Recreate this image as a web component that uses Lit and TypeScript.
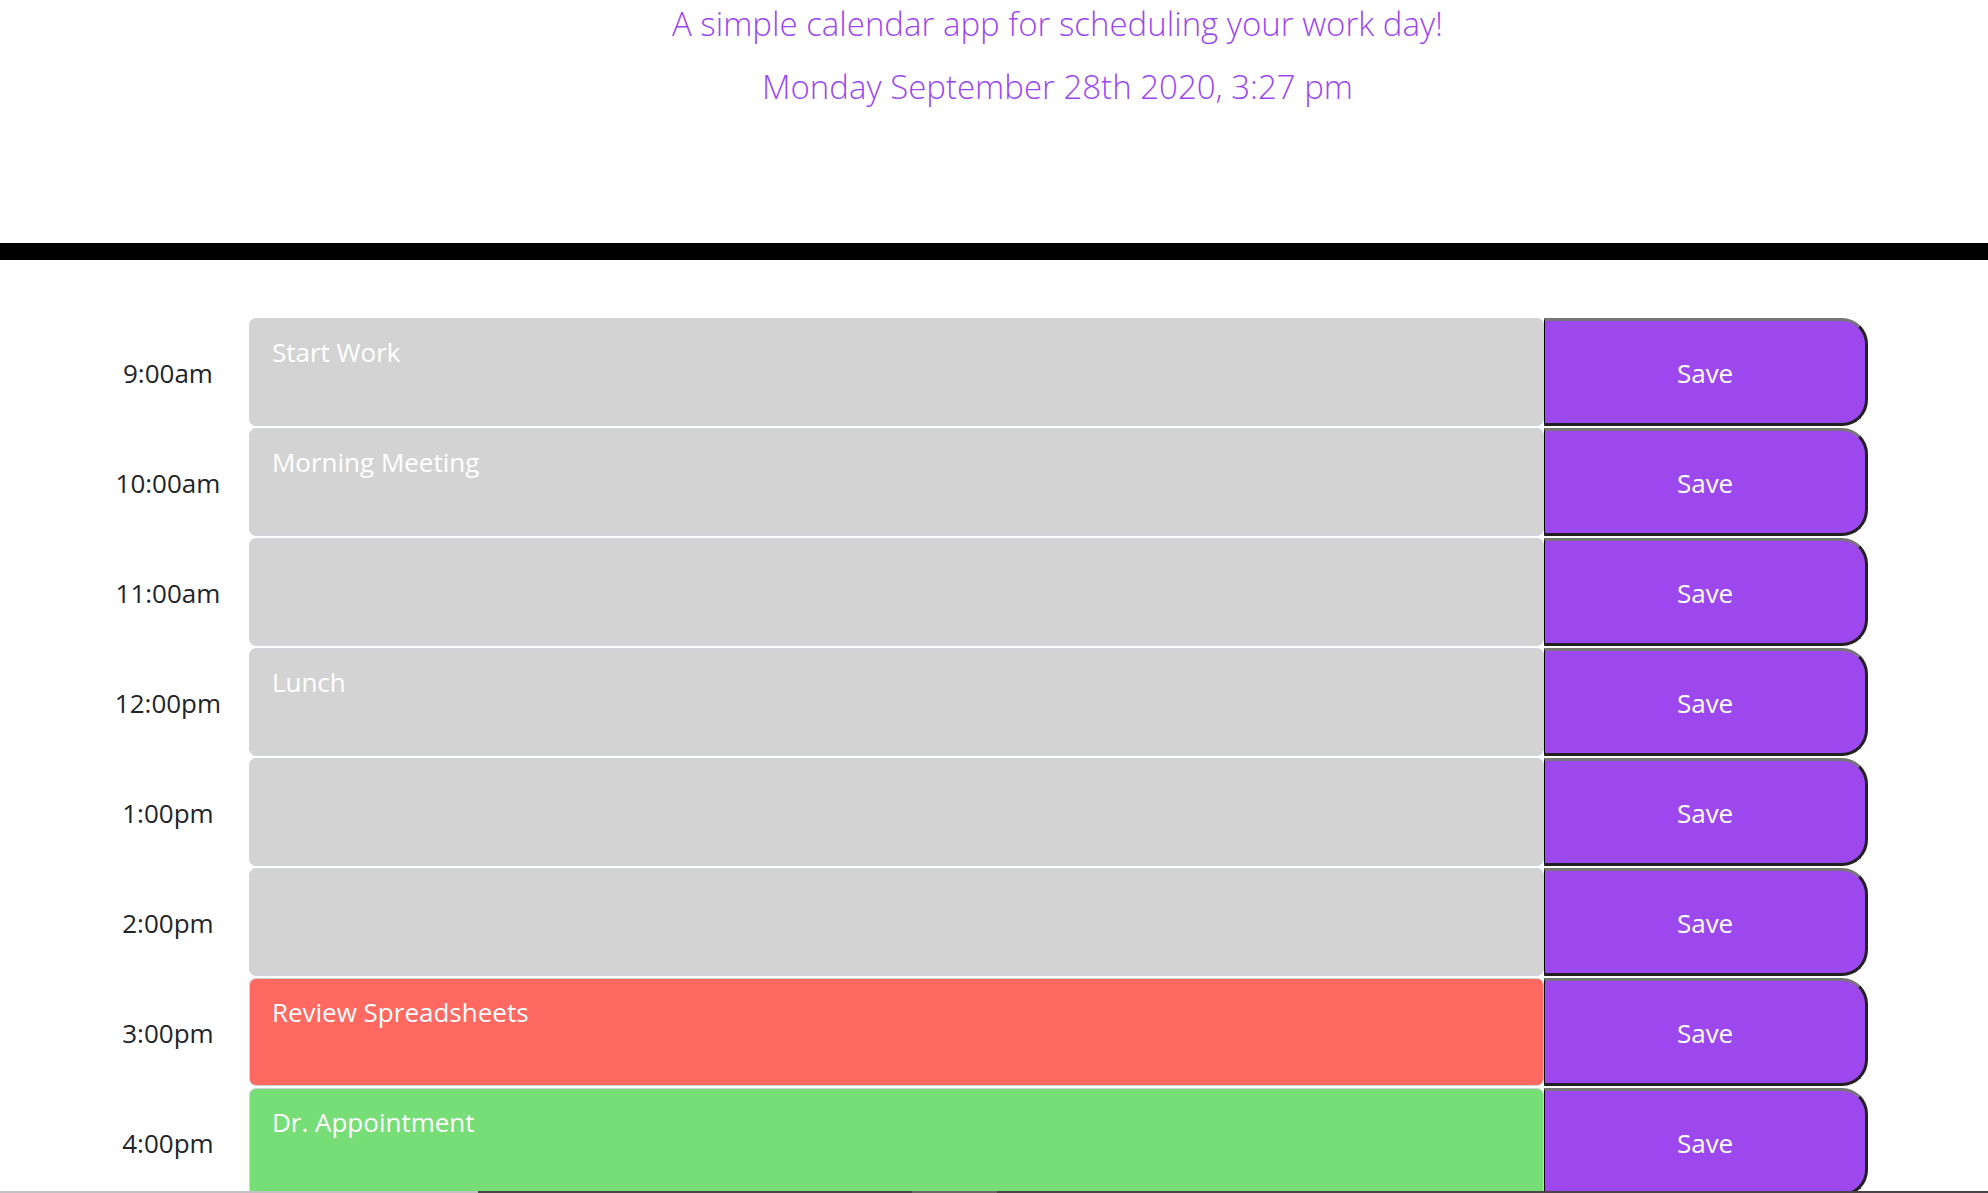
import { LitElement, html, css } from "lit";
import { customElement, property } from "lit/decorators.js";

type Phase = "past" | "present" | "future";

interface Slot {
  hour: string;
  task: string;
  phase: Phase;
}

const SLOTS: Slot[] = [
  { hour: "9:00am", task: "Start Work", phase: "past" },
  { hour: "10:00am", task: "Morning Meeting", phase: "past" },
  { hour: "11:00am", task: "", phase: "past" },
  { hour: "12:00pm", task: "Lunch", phase: "past" },
  { hour: "1:00pm", task: "", phase: "past" },
  { hour: "2:00pm", task: "", phase: "past" },
  { hour: "3:00pm", task: "Review Spreadsheets", phase: "present" },
  { hour: "4:00pm", task: "Dr. Appointment", phase: "future" },
];

@customElement("time-block")
export class TimeBlock extends LitElement {
  @property({ attribute: false }) slotData!: Slot;

  static styles = css`
    :host {
      display: block;
    }
    .row {
      display: grid;
      grid-template-columns: 1fr 8fr 2fr;
      height: 108px;
    }
    .hour {
      display: flex;
      align-items: center;
      justify-content: center;
      padding-top: 2px;
      color: #212529;
    }
    .task {
      box-sizing: border-box;
      width: 100%;
      height: 100%;
      margin: 0;
      padding: 15px 22px;
      border: 1px solid #ced4da;
      border-radius: 7px;
      font: inherit;
      line-height: 36px;
      color: #fff;
      resize: none;
      overflow: hidden;
      outline: none;
    }
    .past {
      background: #d3d3d3;
    }
    .present {
      background: #ff6961;
    }
    .future {
      background: #77dd77;
    }
    .save {
      margin: 0;
      padding: 2px 0 0;
      border-style: solid;
      border-width: 3px 3px 3px 1px;
      border-color: #767676 #212121 #212121 #000;
      border-radius: 0 26px 26px 0;
      background: #9d48ee;
      color: #fff;
      font: inherit;
      cursor: pointer;
    }
  `;

  render() {
    const { hour, task, phase } = this.slotData;
    return html`
      <div class="row">
        <label class="hour" for="task">${hour}</label>
        <textarea class="task ${phase}" id="task" spellcheck="false" .value=${task}></textarea>
        <button class="save" type="button">Save</button>
      </div>
    `;
  }
}

@customElement("app-root")
export class AppRoot extends LitElement {
  static styles = css`
    :host {
      display: flex;
      flex-direction: column;
      height: 100vh;
      overflow: hidden;
      background: #fff;
      font-family: "Open Sans", "Noto Sans", sans-serif;
      font-size: 26px;
      line-height: 40px;
    }
    .header {
      flex: none;
      box-sizing: border-box;
      height: 260px;
      padding-left: 127px;
      border-bottom: 17px solid #000;
      text-align: center;
      color: #9d48ee;
      font-size: 33px;
      font-weight: 300;
    }
    .line {
      margin: 0 0 15px;
      line-height: 48px;
    }
    .schedule {
      flex: 1;
      min-height: 0;
      overflow: hidden;
      display: flex;
      flex-direction: column;
      gap: 2px;
      padding: 58px 120px 0 87px;
    }
    .block {
      flex: none;
    }
    .edge {
      flex: none;
      height: 2px;
      display: grid;
      grid-template-columns: 478fr 434fr 85fr 991fr;
    }
    .light {
      background: #c3c0c3;
    }
    .dark {
      background: #4a444a;
    }
    .mid {
      background: #6b6767;
    }
  `;

  render() {
    return html`
      <header class="header">
        <p class="line">A simple calendar app for scheduling your work day!</p>
        <p class="line">Monday September 28th 2020, 3:27 pm</p>
      </header>
      <main class="schedule">
        ${SLOTS.map((slot) => html`<time-block class="block" .slotData=${slot}></time-block>`)}
      </main>
      <div class="edge">
        <span class="light"></span><span class="dark"></span><span class="mid"></span><span class="dark"></span>
      </div>
    `;
  }
}
